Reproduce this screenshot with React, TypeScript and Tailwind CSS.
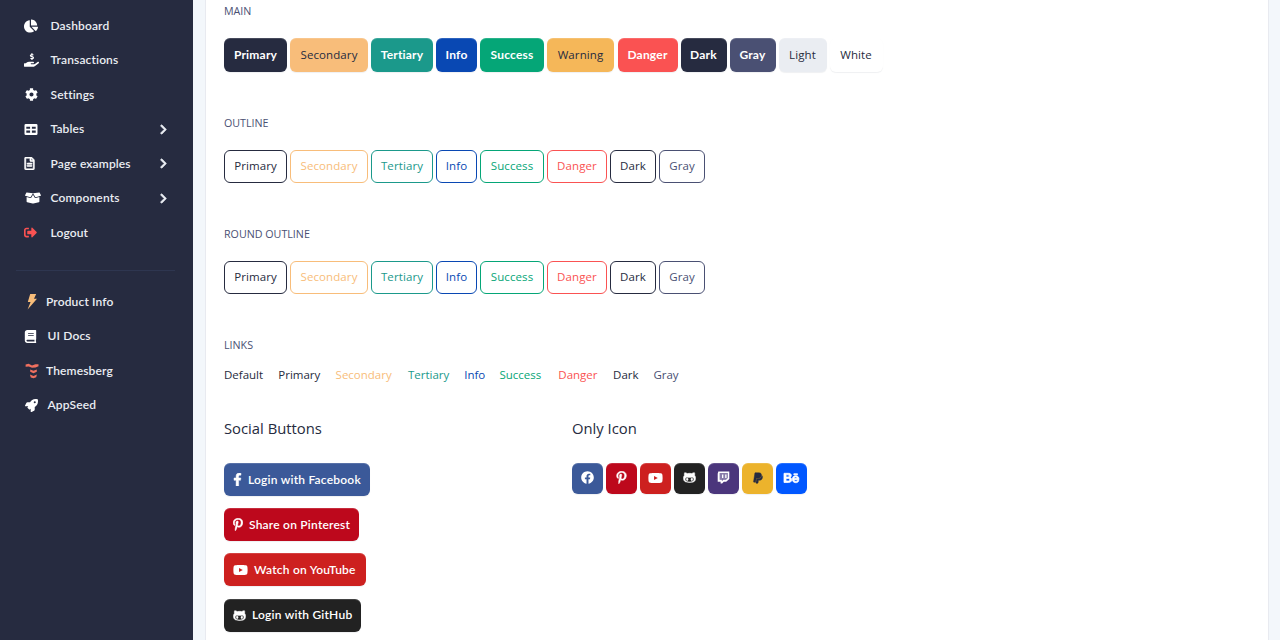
import type { ReactNode } from "react";
import {
  FaBehance,
  FaBook,
  FaBoxOpen,
  FaChartPie,
  FaChevronRight,
  FaCog,
  FaFacebook,
  FaFacebookF,
  FaGithubAlt,
  FaHandHoldingUsd,
  FaPaypal,
  FaPinterestP,
  FaRegFileAlt,
  FaRocket,
  FaSignOutAlt,
  FaYoutube,
} from "react-icons/fa";

const BoltIcon = () => (
  <svg width="12" height="17" viewBox="0 0 12 17" className="ml-[2px]">
    <path d="M4.2 1H10.2L8 5.8H11L1.6 16.6L4.6 9H1.8Z" fill="#f8bd7a" />
  </svg>
);

const ThemesbergIcon = () => (
  <svg width="14" height="16" viewBox="0 0 14 16" className="ml-[1px]" fill="#f0705f">
    <path d="M0.6 1.5L3.6 0.8L7 2.4L10.4 1.2L13.5 1.2V3.2L10.6 4.4L7 4.7L3.8 3.6L0.6 3.8Z" />
    <path d="M5.2 6.6L8.5 7.8L11.8 6.6V8.8L8.5 10.3L5.2 8.8Z" />
    <path d="M4.9 11.4L8.5 13L11.9 11.6L11.2 14.2L8.5 15.3L5.8 14.4Z" />
  </svg>
);

const TableIcon = () => (
  <svg width="14" height="13" viewBox="0 0 14 13">
    <path
      fill="currentColor"
      fillRule="evenodd"
      d="M1.8 1H12.2Q13.5 1 13.5 2.3V10.7Q13.5 12 12.2 12H1.8Q0.5 12 0.5 10.7V2.3Q0.5 1 1.8 1ZM2.3 3.7V5.8H6.1V3.7ZM7.9 3.7V5.8H11.7V3.7ZM2.3 7.6V9.8H6.1V7.6ZM7.9 7.6V9.8H11.7V7.6Z"
    />
  </svg>
);

const TwitchIcon = () => (
  <svg width="13" height="13" viewBox="0 0 13 13">
    <path
      fill="currentColor"
      fillRule="evenodd"
      d="M1.3 0.5H12.3V7.9L9.2 10.8H6.8L5.1 12.5H3.6V10.8H0.7V2.7ZM2.7 1.9V8.7H4.9V10.1L6.3 8.7H9L10.8 7V1.9Z"
    />
    <path fill="currentColor" d="M5 3.4H6.3V7H5ZM8.2 3.4H9.5V7H8.2Z" />
    <path fill="currentColor" opacity="0.35" d="M2.7 1.9H10.8V8.7H2.7Z" />
  </svg>
);

type NavItem = { label: string; icon: ReactNode; arrow?: boolean; column: string };

const mainNav: NavItem[] = [
  { label: "Dashboard", icon: <FaChartPie size={14} />, column: "w-[26.5px]" },
  { label: "Transactions", icon: <FaHandHoldingUsd size={14} className="w-[15px]" />, column: "w-[26.5px]" },
  { label: "Settings", icon: <FaCog size={13} className="ml-[0.5px]" />, column: "w-[26.5px]" },
  { label: "Tables", icon: <TableIcon />, column: "w-[26.5px]", arrow: true },
  {
    label: "Page examples",
    icon: <FaRegFileAlt size={13} stroke="currentColor" strokeWidth={22} className="-ml-[1px]" />,
    column: "w-[26.5px]",
    arrow: true,
  },
  { label: "Components", icon: <FaBoxOpen className="ml-[0.5px] h-[14px] w-[16px]" />, column: "w-[26.5px]", arrow: true },
  { label: "Logout", icon: <FaSignOutAlt size={13} className="text-[#fa5252]" />, column: "w-[26.5px]" },
];

const extraNav: NavItem[] = [
  { label: "Product Info", icon: <BoltIcon />, column: "w-[22px]" },
  { label: "UI Docs", icon: <FaBook size={13} />, column: "w-[23.5px]" },
  { label: "Themesberg", icon: <ThemesbergIcon />, column: "w-[22px]" },
  { label: "AppSeed", icon: <FaRocket size={13} className="ml-[0.5px]" />, column: "w-[23.5px]" },
];

const NavList = ({ items }: { items: NavItem[] }) => (
  <ul>
    {items.map((item) => (
      <li key={item.label} className="flex h-[34.5px] items-center pr-[24.5px] pl-6 text-[#eaedf2]">
        <span className={"flex shrink-0 items-center text-white " + item.column}>{item.icon}</span>
        <span className="grow font-[Lato] text-[12px] font-semibold tracking-[0.14px]">{item.label}</span>
        {item.arrow && <FaChevronRight size={11} stroke="currentColor" strokeWidth={30} />}
      </li>
    ))}
  </ul>
);

const solid = [
  { label: "Primary", style: "w-[63px] bg-[#262b40] font-bold text-white" },
  { label: "Secondary", style: "w-[78px] bg-[#f8bd7a] text-[#262b40]" },
  { label: "Tertiary", style: "w-[62px] bg-[#1b998b] font-bold text-white" },
  { label: "Info", style: "w-[41px] bg-[#0948b3] font-bold text-white" },
  { label: "Success", style: "w-[64px] bg-[#05a677] font-bold text-white" },
  { label: "Warning", style: "mr-[0.5px] w-[67px] bg-[#f5b759] text-[#262b40]" },
  { label: "Danger", style: "w-[60px] bg-[#fa5252] font-bold text-white" },
  { label: "Dark", style: "w-[46px] bg-[#262b40] font-bold text-white" },
  { label: "Gray", style: "w-[46px] bg-[#4a5073] font-bold text-white" },
  { label: "Light", style: "w-[48px] bg-[#eaedf2] text-[#262b40]" },
  { label: "White", style: "w-[53px] bg-white text-[#262b40]" },
];

const outline = [
  { label: "Primary", style: "w-[63px] text-[#262b40]" },
  { label: "Secondary", style: "w-[78px] text-[#f8bd7a]" },
  { label: "Tertiary", style: "w-[62px] text-[#1b998b]" },
  { label: "Info", style: "w-[41px] text-[#0948b3]" },
  { label: "Success", style: "w-[64px] text-[#05a677]" },
  { label: "Danger", style: "w-[60px] text-[#fa5252]" },
  { label: "Dark", style: "w-[46px] text-[#262b40]" },
  { label: "Gray", style: "w-[46px] text-[#4a5073]" },
];

const links = [
  { label: "Default", style: "w-[39px] text-[#262b40]" },
  { label: "Primary", style: "w-[42px] text-[#262b40]" },
  { label: "Secondary", style: "w-[57px] text-[#f8bd7a]" },
  { label: "Tertiary", style: "w-[41px] text-[#1b998b]" },
  { label: "Info", style: "w-[20px] text-[#0948b3]" },
  { label: "Success", style: "w-[43.5px] text-[#05a677]" },
  { label: "Danger", style: "w-[39.5px] text-[#fa5252]" },
  { label: "Dark", style: "w-[25px] text-[#262b40]" },
  { label: "Gray", style: "w-[25px] text-[#4a5073]" },
];

const bold = { stroke: "currentColor", strokeWidth: 18 };

const social = [
  { label: "Login with Facebook", icon: <FaFacebookF {...bold} size={13} className="w-[9px]" />, style: "w-[146px] gap-[6px] bg-[#3b5999]" },
  { label: "Share on Pinterest", icon: <FaPinterestP {...bold} size={13} className="w-[10px]" />, style: "w-[135px] gap-[6px] bg-[#bd081c]" },
  { label: "Watch on YouTube", icon: <FaYoutube className="h-[14px] w-[15px]" />, style: "w-[142px] gap-[6px] bg-[#cd201f]" },
  { label: "Login with GitHub", icon: <FaGithubAlt {...bold} size={13} />, style: "w-[137px] gap-[6px] bg-[#222222]" },
];

const iconOnly = [
  { name: "facebook", icon: <FaFacebook size={13} />, style: "bg-[#3b5999] text-white" },
  { name: "pinterest", icon: <FaPinterestP {...bold} size={13} />, style: "bg-[#bd081c] text-white" },
  { name: "youtube", icon: <FaYoutube className="h-[14px] w-[15px]" />, style: "bg-[#cd201f] text-white" },
  { name: "github", icon: <FaGithubAlt {...bold} size={13} />, style: "bg-[#222222] text-white" },
  { name: "twitch", icon: <TwitchIcon />, style: "bg-[#4b367c] text-white" },
  { name: "paypal", icon: <FaPaypal {...bold} size={12} />, style: "bg-[#ecb32c] text-[#262b40]" },
  { name: "behance", icon: <FaBehance stroke="currentColor" strokeWidth={30} className="h-[14px] w-[15px] overflow-visible" />, style: "bg-[#0057ff] text-white" },
];

const raised = "shadow-[inset_0_1px_0_rgba(255,255,255,0.15),0_1px_1px_rgba(46,54,80,0.075)]";

const Label = ({ children }: { children: ReactNode }) => (
  <h2 className="h-4 text-[10.7px] leading-4 text-[#4a5073]">{children}</h2>
);

const OutlineRow = () => (
  <div className="flex gap-[3px]">
    {outline.map((b) => (
      <button
        key={b.label}
        className={"flex h-[33px] items-center justify-center rounded-[6px] border border-current pb-px text-[11.5px] tracking-[0.1px] " + b.style}
      >
        {b.label}
      </button>
    ))}
  </div>
);

export default function App() {
  return (
    <div className="flex h-[640px] w-[1280px] overflow-hidden bg-[#f3f7fb] font-['Open_Sans',sans-serif] whitespace-nowrap">
      <nav className="w-[193px] shrink-0 bg-[#262b40] pt-[8.4px]">
        <NavList items={mainNav} />
        <div className="mt-[20px] mr-[18px] mb-[13.6px] ml-4 h-px bg-[#2e3650]" />
        <NavList items={extraNav} />
      </nav>

      <main className="mr-[11px] ml-3 grow border-x border-[#e8eaf0] bg-white pt-[3px] pl-[18px]">
        <Label>MAIN</Label>
        <div className="mt-[19px] flex gap-[3px]">
          {solid.map((b) => (
            <button
              key={b.label}
              className={
                "flex h-[34px] items-center justify-center rounded-[6px] text-[11.5px] tracking-[0.1px] [&.font-bold]:font-[Lato] [&.font-bold]:text-[12px] [&.font-bold]:tracking-[0.2px] " +
                raised + " " + b.style
              }
            >
              {b.label}
            </button>
          ))}
        </div>

        <div className="mt-[43px] mb-[19px]">
          <Label>OUTLINE</Label>
        </div>
        <OutlineRow />

        <div className="mt-[43px] mb-[19px]">
          <Label>ROUND OUTLINE</Label>
        </div>
        <OutlineRow />

        <div className="mt-[43px]">
          <Label>LINKS</Label>
        </div>
        <div className="mt-[14px] flex gap-[15.3px] text-[11.5px] leading-4">
          {links.map((l) => (
            <a key={l.label} className={l.style}>{l.label}</a>
          ))}
        </div>

        <div className="mt-[35px] flex text-[#262b40]">
          <section className="w-[348px]">
            <h3 className="text-[14.8px] leading-5">Social Buttons</h3>
            <div className="mt-[25px] flex flex-col gap-[12.2px]">
              {social.map((s) => (
                <button
                  key={s.label}
                  className={
                    "flex h-[33px] items-center rounded-[6px] pl-[9px] font-[Lato] text-[12px] font-semibold tracking-[0.22px] text-white " +
                    raised + " " + s.style
                  }
                >
                  {s.icon}
                  {s.label}
                </button>
              ))}
            </div>
          </section>
          <section>
            <h3 className="text-[14.8px] leading-5">Only Icon</h3>
            <div className="mt-[25px] flex gap-[3px]">
              {iconOnly.map((s) => (
                <button
                  key={s.name}
                  className={"flex size-[31px] items-center justify-center rounded-[6px] pb-[1.5px] " + raised + " " + s.style}
                >
                  {s.icon}
                </button>
              ))}
            </div>
          </section>
        </div>
      </main>
    </div>
  );
}
